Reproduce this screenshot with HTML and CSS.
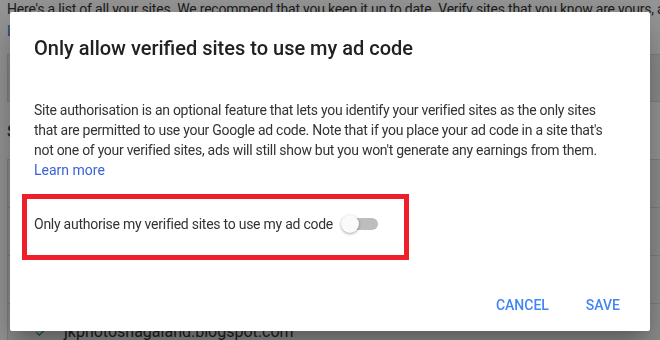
FILE: index.html
```html
<!DOCTYPE html>
<html>
<head>
  <meta charset="UTF-8">
  <link rel="stylesheet" href="styles.css">
</head>
<body>
  <div class="page">
    <p class="intro">Here's a list of all your sites. We recommend that you keep it up to date. Verify sites that you know are yours, and remove any that you don't recognise.</p>
    <a class="page-link" href="#">Learn more</a>

    <div class="card card-auth"></div>

    <h2 class="section-title">Sites</h2>

    <div class="card card-list">
      <div class="row"></div>
      <div class="row"></div>
      <div class="row"></div>
      <div class="row site-row">
        <svg class="check" width="14" height="14" viewBox="0 0 24 24"><path d="M9 16.2L4.8 12l-1.4 1.4L9 19 21 7l-1.4-1.4z" fill="#188038"/></svg>
        <span>jkphotosnagaland.blogspot.com</span>
      </div>
    </div>
  </div>

  <div class="scrim"></div>

  <div class="dialog">
    <h1 class="dialog-title">Only allow verified sites to use my ad code</h1>

    <p class="dialog-text">
      Site authorisation is an optional feature that lets you identify your verified sites as the only sites<br>
      that are permitted to use your Google ad code. Note that if you place your ad code in a site that's<br>
      not one of your verified sites, ads will still show but you won't generate any earnings from them.<br>
      <a class="link" href="#">Learn more</a>
    </p>

    <div class="highlight">
      <div class="toggle-row">
        <span>Only authorise my verified sites to use my ad code</span>
        <span class="toggle">
          <span class="track"></span>
          <span class="knob"></span>
        </span>
      </div>
    </div>

    <div class="actions">
      <button class="btn">Cancel</button>
      <button class="btn">Save</button>
    </div>
  </div>
</body>
</html>
```

FILE: styles.css
```css
body {
  margin: 0;
  width: 660px;
  height: 340px;
  overflow: hidden;
  font-family: 'Roboto', 'Liberation Sans', sans-serif;
  color: #333;
  background: #fafafa;
}

/* page behind the dialog */
.page {
  height: 340px;
  overflow: hidden;
  padding: 0 0 0 7px;
}

.intro {
  margin: 0;
  font-size: 14px;
  line-height: 18px;
  white-space: nowrap;
  letter-spacing: -0.2px;
  color: #333;
}

.page-link {
  display: block;
  margin-top: 4px;
  font-size: 14px;
  line-height: 18px;
  color: #3367d6;
  text-decoration: none;
}

.card {
  background: #e8e8e8;
  border: 1px solid #d6d6d6;
  border-right: none;
}

.card-auth {
  margin-top: 14px;
  height: 46px;
}

.section-title {
  margin: 0;
  padding: 20px 0 0;
  height: 37px;
  font-size: 16px;
  font-weight: 500;
  color: #444;
}

.card-list {
  background: #ececec;
}

.row {
  height: 47px;
  border-bottom: 1px solid #d2d2d2;
}

.site-row {
  display: flex;
  align-items: center;
  gap: 16px;
  padding: 4px 0 0 26px;
  font-size: 16px;
  color: #333;
}

.scrim {
  position: fixed;
  inset: 0;
  background: rgba(0, 0, 0, 0.4);
}

/* dialog */
.dialog {
  position: fixed;
  left: 10px;
  top: 12px;
  width: 640px;
  height: 319px;
  box-sizing: border-box;
  display: flex;
  flex-direction: column;
  background: #fff;
  border-radius: 2px;
  box-shadow: 0 11px 15px -7px rgba(0, 0, 0, 0.2),
              0 24px 38px 3px rgba(0, 0, 0, 0.14),
              0 9px 46px 8px rgba(0, 0, 0, 0.12);
}

.dialog-title {
  margin: 0;
  padding: 24px 24px 0;
  font-size: 20px;
  font-weight: 500;
  line-height: 24px;
  color: #212121;
}

.dialog-text {
  margin: 40px 0 0;
  padding: 0 24px;
  font-size: 14px;
  line-height: 20px;
  letter-spacing: -0.28px;
  color: #333;
}

.link {
  color: #3b63d8;
  letter-spacing: 0;
  text-decoration: none;
}

.highlight {
  margin: 14px 0 0 12px;
  width: 387px;
  height: 66px;
  box-sizing: border-box;
  border: 5px solid #ee1f2b;
  padding: 11px 0 0 7px;
}

.toggle-row {
  display: flex;
  align-items: center;
  gap: 8px;
  height: 28px;
  font-size: 14px;
  letter-spacing: -0.25px;
  color: #333;
}

.toggle {
  position: relative;
  width: 37px;
  height: 18px;
}

.track {
  position: absolute;
  left: 3px;
  right: 0;
  top: 3px;
  height: 12px;
  border-radius: 6px;
  background: #bdbdbd;
}

.knob {
  position: absolute;
  left: 0;
  top: 0;
  width: 18px;
  height: 18px;
  border-radius: 50%;
  background: #fafafa;
  box-shadow: 0 1px 3px rgba(0, 0, 0, 0.35);
}

.actions {
  margin-top: auto;
  display: flex;
  justify-content: flex-end;
  gap: 5px;
  padding: 0 14px 8px 0;
}

.btn {
  height: 36px;
  padding: 0 16px;
  border: none;
  background: none;
  font-family: 'Roboto', 'Liberation Sans', sans-serif;
  font-size: 14px;
  font-weight: 500;
  line-height: 36px;
  text-transform: uppercase;
  color: #4285f4;
  cursor: pointer;
}
```
